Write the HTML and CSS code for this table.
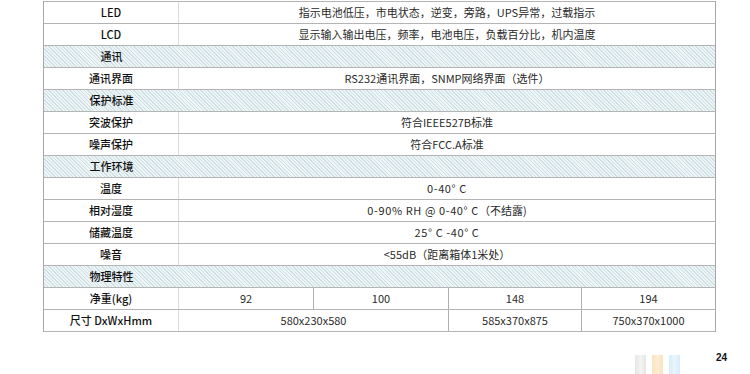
FILE: index.html
```html
<!DOCTYPE html>
<html lang="zh-CN">
<head>
<meta charset="utf-8">
<title>规格</title>
<link rel="stylesheet" href="styles.css">
</head>
<body>
<div class="spec">
  <div class="row"><div class="label">LED</div><div class="val">指示电池低压，市电状态，逆变，旁路，UPS异常，过载指示</div></div>
  <div class="row"><div class="label">LCD</div><div class="val">显示输入输出电压，频率，电池电压，负载百分比，机内温度</div></div>
  <div class="row section"><div class="label">通讯</div><div class="val"></div></div>
  <div class="row"><div class="label">通讯界面</div><div class="val">RS232通讯界面，SNMP网络界面（选件）</div></div>
  <div class="row section"><div class="label">保护标准</div><div class="val"></div></div>
  <div class="row"><div class="label">突波保护</div><div class="val">符合IEEE527B标准</div></div>
  <div class="row"><div class="label">噪声保护</div><div class="val">符合FCC.A标准</div></div>
  <div class="row section"><div class="label">工作环境</div><div class="val"></div></div>
  <div class="row"><div class="label">温度</div><div class="val latin">0-40° C</div></div>
  <div class="row"><div class="label">相对湿度</div><div class="val"><span class="latin">0-90% RH @ 0-40° C</span>（不结露)</div></div>
  <div class="row"><div class="label">储藏温度</div><div class="val latin">25° C -40° C</div></div>
  <div class="row"><div class="label">噪音</div><div class="val">&lt;55dB（距离箱体1米处）</div></div>
  <div class="row section"><div class="label">物理特性</div><div class="val"></div></div>
  <div class="row multi"><div class="label">净重(kg)</div><div class="val">92</div><div class="val">100</div><div class="val">148</div><div class="val">194</div></div>
  <div class="row multi"><div class="label">尺寸 DxWxHmm</div><div class="val span2">580x230x580</div><div class="val">585x370x875</div><div class="val">750x370x1000</div></div>
</div>
<div class="footer">
  <span class="bar bar-gray"></span>
  <span class="bar bar-orange"></span>
  <span class="bar bar-blue"></span>
  <span class="page-no">24</span>
</div>
</body>
</html>
```
FILE: styles.css
```css
html, body {
  margin: 0;
  padding: 0;
  background: #fff;
}
body {
  font-family: "Noto Sans CJK SC", "Noto Sans", sans-serif;
  font-size: 11px;
  color: #2a2a2a;
  width: 750px;
  height: 374px;
  overflow: hidden;
}
.spec {
  box-sizing: border-box;
  width: 673px;
  margin: 1px 0 0 43px;
  border-left: 1px solid #a8a8a8;
  border-right: 1px solid #a8a8a8;
  border-top: 1px solid #b4b4b4;
}
.row {
  display: grid;
  grid-template-columns: 135px 1fr;
  height: 22px;
  box-sizing: border-box;
  border-bottom: 1px solid #b4b4b4;
}
.row.multi {
  grid-template-columns: 135px 134px 135px 133px 1fr;
}
.row > div {
  box-sizing: border-box;
  line-height: 21px;
  text-align: center;
  white-space: nowrap;
}
.label {
  color: #111;
  font-weight: 500;
  border-right: 1px solid #dcdcdc;
}
.latin {
  letter-spacing: 0.6px;
}
.multi .val + .val {
  border-left: 1px solid #b0b0b0;
}
.multi .span2 {
  grid-column: span 2;
}
.section {
  background: repeating-linear-gradient(45deg, #cfdfe3 0 1px, #eef5f7 1px 2.5px);
}
.section .label {
  border-right: none;
}
.footer {
  display: flex;
  align-items: flex-start;
  margin: 23px 0 0 635px;
  gap: 6px;
}
.bar {
  display: block;
  width: 11px;
  height: 20px;
}
.bar-gray { background: linear-gradient(90deg, #e6e6e6, #f3f3f3 50%, #e6e6e6); }
.bar-orange { background: linear-gradient(90deg, #fbe2bd, #fdeed6 50%, #fbe2bd); }
.bar-blue { background: linear-gradient(90deg, #d6ecfb, #e8f5fd 50%, #d6ecfb); }
.page-no {
  margin: -3px 0 0 30px;
  font-family: "Liberation Sans", sans-serif;
  font-weight: bold;
  font-size: 10px;
  color: #111;
}
```
